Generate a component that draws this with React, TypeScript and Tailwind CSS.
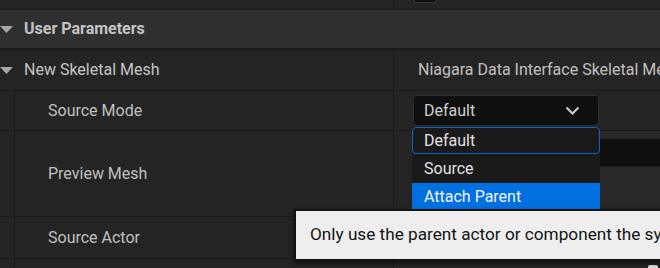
import type { ReactNode } from "react";

const Caret = () => (
  <svg width="13" height="7" viewBox="0 0 13 7" className="shrink-0">
    <polygon points="0,0 13,0 6.5,7" fill="#a6a6a6" />
  </svg>
);

const Chevron = () => (
  <svg width="15" height="9" viewBox="0 0 15 9" className="shrink-0">
    <polyline points="1.5,1.5 7.5,7.5 13.5,1.5" fill="none" stroke="#c8c8c8" strokeWidth="2.2" />
  </svg>
);

// a property row nested under "New Skeletal Mesh"
const ChildRow = ({ label, height, children }: { label: string; height: string; children?: ReactNode }) => (
  <div className={`flex ${height} bg-[#242424]`}>
    <div className="w-[14px] bg-[#242424]" />
    <div className="w-px bg-[#1a1a1a]" />
    <div className="w-[378px] flex items-center pl-[33px] text-[16px] text-[#c0c0c0]">{label}</div>
    <div className="w-px bg-[#1a1a1a]" />
    <div className="flex-1 min-w-0">{children}</div>
  </div>
);

export default function App() {
  return (
    <div className="relative w-[660px] h-[268px] overflow-hidden bg-[#1a1a1a] font-['Roboto',sans-serif] select-none">
      <div className="flex flex-col">
        {/* tail of the previous row */}
        <div className="flex h-[9px] bg-[#242424] mb-px">
          <div className="w-[393px]" />
          <div className="w-px bg-[#1a1a1a]" />
          <div className="flex-1 pl-[19px]">
            <div className="w-[24px] h-[3px] bg-[#0f0f0f] border-x border-b border-[#3a3a3a] rounded-b-[3px]" />
          </div>
        </div>

        {/* category header */}
        <div className="flex items-center gap-[11px] h-[38px] bg-[#2f2f2f] mb-[2px]">
          <Caret />
          <span className="text-[16px] font-bold text-[#c4c4c4]">User Parameters</span>
        </div>

        {/* parameter */}
        <div className="flex h-[40px] bg-[#242424] mb-px">
          <div className="w-[393px] flex items-center gap-[11px]">
            <Caret />
            <span className="text-[16px] text-[#c4c4c4]">New Skeletal Mesh</span>
          </div>
          <div className="w-px bg-[#1a1a1a]" />
          <div className="flex-1 min-w-0 flex items-center pl-[24px] text-[16px] text-[#c0c0c0] whitespace-nowrap overflow-hidden">
            Niagara Data Interface Skeletal Mesh
          </div>
        </div>

        <div className="mb-px">
          <ChildRow label="Source Mode" height="h-[39px]">
            <div className="h-full flex items-center pl-[19px]">
              <div className="w-[186px] h-[31px] flex items-center justify-between pl-[10px] pr-[18px] bg-[#0f0f0f] border border-[#2c2c2c] rounded-[4px] text-[16px] text-[#d0d0d0]">
                Default
                <Chevron />
              </div>
            </div>
          </ChildRow>
        </div>

        <div className="mb-px">
          <ChildRow label="Preview Mesh" height="h-[85px]">
            <div className="h-full pl-[19px]">
              <div className="h-full flex flex-col bg-[#282828]">
                <div className="h-[8px] border-b border-[#1e1e1e]" />
                <div className="h-[28px] bg-[#0f0f0f] border-b border-[#1e1e1e]" />
              </div>
            </div>
          </ChildRow>
        </div>

        <div className="mb-px">
          <ChildRow label="Source Actor" height="h-[41px]" />
        </div>

        <div className="flex h-[9px] bg-[#242424]">
          <div className="w-[14px]" />
          <div className="w-px bg-[#1a1a1a]" />
          <div className="w-[378px]" />
          <div className="w-px bg-[#1a1a1a]" />
          <div className="flex-1 flex justify-end pr-[2px] pt-[6px]">
            <div className="w-[10px] h-[3px] bg-[#d8d8d8] rounded-t-[2px]" />
          </div>
        </div>
      </div>

      {/* open combo list */}
      <div className="absolute left-[412px] top-[127px] w-[188px] h-[90px] bg-[#1a1a1a] flex flex-col text-[16px]">
        <div className="h-[27px] flex items-center pl-[11px] border border-[#0a66c8] rounded-[4px] text-[#e2e2e2]">Default</div>
        <div className="h-[29px] flex items-center pl-[12px] text-[#e2e2e2]">Source</div>
        <div className="h-[28px] flex items-center pl-[12px] bg-[#0070e0] text-[#f4f4f4]">Attach Parent</div>
      </div>

      {/* tooltip */}
      <div className="absolute left-[294px] top-[209px] w-[420px] h-[52px] bg-[#eeeeee] border-2 border-[#141414] shadow-[0_2px_4px_rgba(0,0,0,0.6)] flex items-center pl-[14px] text-[17.2px] text-[#141414] whitespace-nowrap">
        Only use the parent actor or component the system is attached to
      </div>
    </div>
  );
}
